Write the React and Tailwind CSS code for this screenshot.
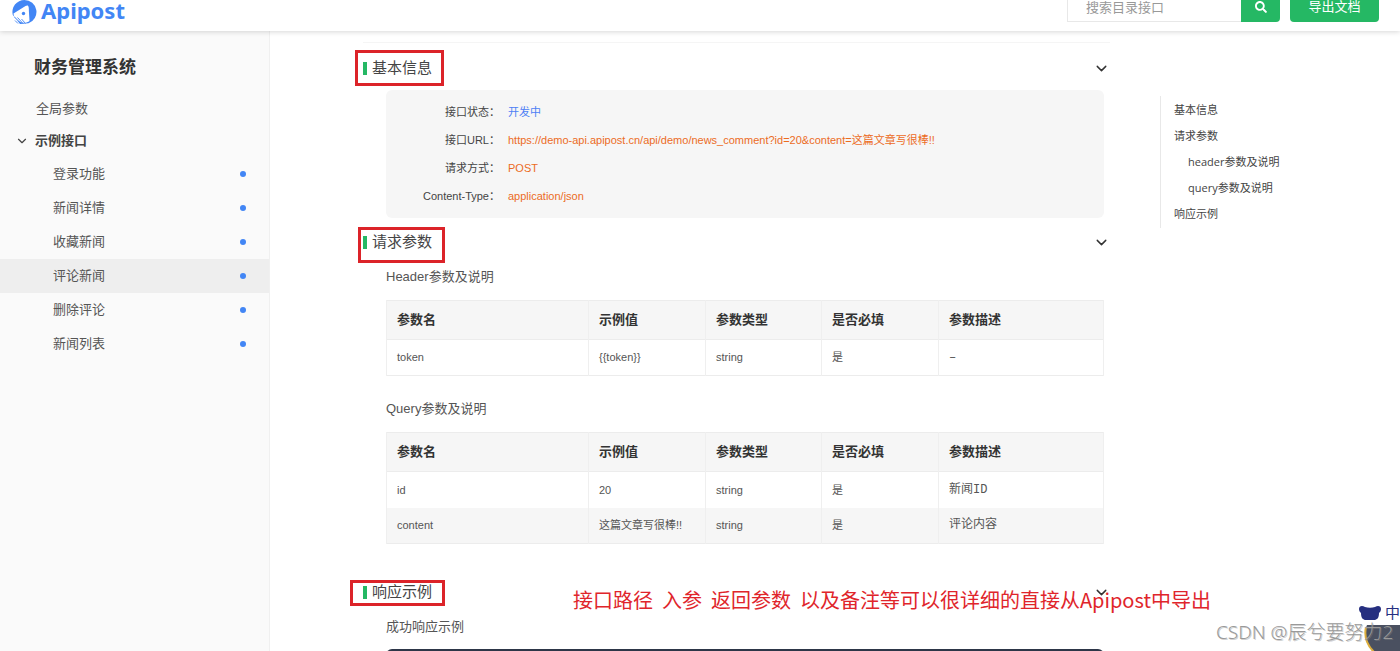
import { useState } from 'react'
import { ChevronDown } from 'lucide-react'
import { FaSearch } from 'react-icons/fa'

const menu = ['登录功能', '新闻详情', '收藏新闻', '评论新闻', '删除评论', '新闻列表']

const info = [
  { label: '接口状态', value: '开发中', color: 'text-[#4d80f5]' },
  {
    label: '接口URL',
    value: 'https://demo-api.apipost.cn/api/demo/news_comment?id=20&content=这篇文章写很棒!!',
    color: 'text-[#ec6c1f]',
  },
  { label: '请求方式', value: 'POST', color: 'text-[#ec6c1f]' },
  { label: 'Content-Type', value: 'application/json', color: 'text-[#ec6c1f]' },
]

const columns = ['参数名', '示例值', '参数类型', '是否必填', '参数描述']

const headerRows = [['token', '{{token}}', 'string', '是', '–']]

const queryRows = [
  ['id', '20', 'string', '是', '新闻ID'],
  ['content', '这篇文章写很棒!!', 'string', '是', '评论内容'],
]

const toc = [
  { label: '基本信息', id: 'base' },
  { label: '请求参数', id: 'request' },
  { label: 'header参数及说明', id: 'header-params', nested: true },
  { label: 'query参数及说明', id: 'query-params', nested: true },
  { label: '响应示例', id: 'response' },
]

function Logo() {
  return (
    <a href="#" className="flex items-start gap-1 text-[#4286f5]">
      <svg width="25" height="25" viewBox="0 0 25 25" aria-hidden="true">
        <path d="M12.500 0a12 12 0 0 1 4 23.300L8 24 .8 15A12 12 0 0 1 12.500 0Z" fill="#4286f5" />
        <path d="M1.500 13.500 13.500 6c1.800-1 3-.6 3.200 1.500l.8 13.500c-2 1.800-5 2-7.500 1.500C5.500 21.500 2 18 1.500 13.500Z" fill="#fff" />
        <circle cx="11.500" cy="13.500" r="1.700" fill="#4286f5" />
        <path d="m2.500 17 5 5M5.500 17.500l5.500 6M3 20.500l3 3M9.500 19l4 4.500" stroke="#4286f5" strokeWidth="0.9" />
      </svg>
      <span className="font-['Noto_Sans'] text-[22px] leading-5 font-bold">Apipost</span>
    </a>
  )
}

function TopBar() {
  return (
    <header className="relative z-10 flex h-[31px] items-end justify-between bg-white pr-[21px] pl-3 shadow-[0_1px_5px_rgba(0,0,0,0.16)]">
      <div className="self-start">
        <Logo />
      </div>
      <div className="flex gap-[10px] pb-[9px]">
        <form className="flex" onSubmit={(e) => e.preventDefault()}>
          <input
            type="search"
            aria-label="搜索目录接口"
            placeholder="搜索目录接口"
            className="h-[30px] w-[174px] border border-r-0 border-[#e8e8e8] px-[18px] text-[13px] outline-none placeholder:text-[#999]"
          />
          <button type="submit" aria-label="搜索" className="flex h-[30px] w-[39px] items-center justify-center rounded-r bg-[#25b864] text-white">
            <FaSearch size={12} />
          </button>
        </form>
        <button className="h-[30px] w-[89px] rounded bg-[#25b864] text-[13px] text-white">导出文档</button>
      </div>
    </header>
  )
}

function Sidebar() {
  const [active, setActive] = useState('评论新闻')

  return (
    <aside className="w-[270px] shrink-0 border-r border-[#f0f0f0] bg-[#fafafa] pt-[21px]">
      <h1 className="pl-[34px] text-[17px] leading-8 font-bold text-[#333]">财务管理系统</h1>
      <nav className="pt-[9px] text-[13px] text-[#555]">
        <a href="#" className="block pl-9 leading-8">全局参数</a>
        <button className="flex h-8 w-full items-center gap-[6px] pl-[15px] font-bold text-[#444]">
          <ChevronDown size={14} strokeWidth={2} />
          示例接口
        </button>
        <ul>
          {menu.map((item) => (
            <li key={item}>
              <button
                onClick={() => setActive(item)}
                className={`flex h-[34px] w-full items-center justify-between pr-[23px] pl-[53px] ${item === active ? 'bg-[#eeeeee]' : ''}`}
              >
                {item}
                <span className="h-[6px] w-[6px] rounded-full bg-[#4286f5]" />
              </button>
            </li>
          ))}
        </ul>
      </nav>
    </aside>
  )
}

function Section({ id, title, mark, children }) {
  const [open, setOpen] = useState(true)

  return (
    <section id={id}>
      <div className="relative flex h-8 items-center justify-between">
        <h2 className="flex items-center gap-[5px] text-[15px] text-[#444]">
          <span className="h-[13px] w-1 bg-[#25b864]" />
          {title}
        </h2>
        <button onClick={() => setOpen((v) => !v)} aria-label={title} className="text-[#333]">
          <ChevronDown size={17} strokeWidth={2} />
        </button>
        <span className={`pointer-events-none absolute border-3 border-[#dc2329] ${mark}`} />
      </div>
      {open ? <div className="pr-[6px] pl-[23px]">{children}</div> : null}
    </section>
  )
}

function ParamTable({ rows }) {
  return (
    <table className="w-full table-fixed border-collapse border border-[#ececec] text-left text-[11px] text-[#555]">
      <thead className="bg-[#f6f6f6] text-[13px] text-[#333]">
        <tr className="h-[39px] border-b border-[#ececec]">
          {columns.map((c) => (
            <th key={c} className="border-x border-[#efefef] px-[10px] font-bold first:w-[202px] nth-2:w-[117px] nth-3:w-[116px] nth-4:w-[117px]">
              {c}
            </th>
          ))}
        </tr>
      </thead>
      <tbody>
        {rows.map((row) => (
          <tr key={row[0]} className="h-9 even:bg-[#f6f6f6]">
            {row.map((cell, i) => (
              <td
                key={columns[i]}
                className="border-x border-[#efefef] px-[10px] last:font-['Liberation_Mono','Noto_Sans_CJK_SC',monospace] last:text-xs"
              >
                {cell}
              </td>
            ))}
          </tr>
        ))}
      </tbody>
    </table>
  )
}

function Toc() {
  return (
    <nav className="mt-[65px] h-[132px] w-[240px] shrink-0 border-l border-[#e8e8e8] pt-px pl-[13px] font-['Open_Sans','Noto_Sans_CJK_SC',sans-serif] text-[11px] text-[#444]">
      {toc.map((t) => (
        <a key={t.id} href={`#${t.id}`} className={`block leading-[26px] ${t.nested ? 'pl-[14px]' : ''}`}>
          {t.label}
        </a>
      ))}
    </nav>
  )
}

function Watermark() {
  return (
    <div className="absolute right-0 bottom-0 h-12 w-[190px] overflow-hidden">
      <svg width="60" height="48" viewBox="0 0 60 48" className="absolute right-0 bottom-0" aria-hidden="true">
        <path d="M19 6c0-3 3-4 6-2 3 1 7 1 10 0 3-2 6-1 6 2 0 2-1 3-2 4 0 5-2 7-5 7h-8c-3 0-5-2-5-7-1-1-2-2-2-4Z" fill="#262f80" />
        <path d="M60 22H27c-4 8-2 18 6 26h27Z" fill="#4a5060" />
        <path d="M26 24c-2 9 1 18 8 25" fill="none" stroke="#dcae3c" strokeWidth="2" />
      </svg>
      <span className="absolute top-0 left-[175px] text-[15px] leading-5 text-[#262f80]">中</span>
      <span className="absolute bottom-[5px] left-[6px] font-['Noto_Sans','Noto_Sans_CJK_SC',sans-serif] text-[19px] leading-7 font-light whitespace-nowrap text-[#999] [text-shadow:1px_1px_0_#8886]">
        CSDN @辰兮要努力2
      </span>
    </div>
  )
}

export default function App() {
  return (
    <div className="relative flex h-screen flex-col overflow-hidden bg-white font-['Liberation_Sans','Noto_Sans_CJK_SC',sans-serif]">
      <TopBar />
      <div className="flex min-h-0 flex-1">
        <Sidebar />
        <main className="min-w-0 flex-1 pt-[11px] pr-[50px] pl-[93px]">
          <div className="border-t border-[#f5f5f5] pt-[9px]">
            <Section id="base" title="基本信息" mark="-top-[2px] -left-2 h-9 w-[89px]">
              <dl className="mt-[6px] rounded-md bg-[#f6f6f6] py-2 text-[11px] leading-7">
                {info.map((row) => (
                  <div key={row.label} className="flex">
                    <dt className="w-[114px] text-right text-[#444]">{row.label}：</dt>
                    <dd className={`pl-2 ${row.color}`}>{row.value}</dd>
                  </div>
                ))}
              </dl>
            </Section>
            <div className="h-2" />
            <Section id="request" title="请求参数" mark="top-[1px] -left-[5px] h-9 w-[87px]">
              <h3 id="header-params" className="pt-1 pb-2 text-[13px] leading-[30px] text-[#555]">Header参数及说明</h3>
              <ParamTable rows={headerRows} />
              <h3 id="query-params" className="pt-[18px] pb-2 text-[13px] leading-[30px] text-[#555]">Query参数及说明</h3>
              <ParamTable rows={queryRows} />
            </Section>
            <div className="h-8" />
            <Section id="response" title="响应示例" mark="top-1 -left-[13px] h-[26px] w-[95px]">
              <h3 className="pt-1 pb-[7px] text-[13px] leading-[30px] text-[#555]">成功响应示例</h3>
              <pre className="h-40 rounded-md bg-[#2d3648]" />
            </Section>
          </div>
        </main>
        <Toc />
      </div>
      <p className="absolute bottom-9 left-[573px] font-['Noto_Sans_CJK_SC',sans-serif] text-xl leading-[30px] whitespace-pre text-[#e0252b]">
        接口路径  入参  返回参数  以及备注等可以很详细的直接从Apipost中导出
      </p>
      <Watermark />
    </div>
  )
}
